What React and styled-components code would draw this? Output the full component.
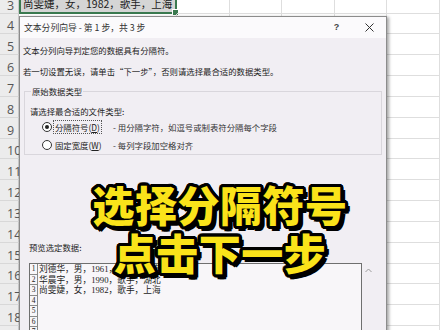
import React from 'react';
import styled, { createGlobalStyle } from 'styled-components';

const ROW_H = 20.85;

const Global = createGlobalStyle`
  html, body { margin: 0; padding: 0; background: #fff; }
  body { width: 440px; height: 330px; overflow: hidden; font-family: "Noto Sans CJK SC", "Noto Sans", sans-serif; }
  #root { width: 440px; height: 330px; overflow: hidden; }
`;

const Screen = styled.div`
  position: relative;
  width: 440px;
  height: 330px;
  overflow: hidden;
  background: #fff;
`;

const Sheet = styled.div`
  display: flex;
  flex-direction: column;
  margin-top: -7.35px;
`;

const Row = styled.div`
  display: grid;
  grid-template-columns: 19px 158px repeat(6, 52.5px);
  height: ${ROW_H}px;
`;

const RowNum = styled.div`
  box-sizing: border-box;
  background: #ececec;
  border-right: 1px solid #c9c9c9;
  border-bottom: 1px solid #d8d8d8;
  color: #555;
  font: 12.5px/12px "Open Sans", "Noto Sans", sans-serif;
  display: flex;
  align-items: flex-end;
  padding: 0 0 1px 7px;
  white-space: nowrap;
  overflow: visible;
`;

const Cell = styled.div`
  position: relative;
  box-sizing: border-box;
  border-right: 1px solid #dedede;
  border-bottom: 1px solid #dedede;
  background: ${(p) => (p.$selected ? '#d5d5d5' : 'transparent')};
  ${(p) =>
    p.$selected &&
    `
    border: 2px solid #3b7a50;
    border-top: none;
  `}
  display: flex;
  align-items: flex-end;
  padding: 0 0 2px 2px;
  font: 10.5px/12px "Noto Sans CJK SC", sans-serif;
  color: #222;
  white-space: nowrap;
`;

const FillHandle = styled.span`
  position: absolute;
  right: -4px;
  bottom: -4px;
  width: 5px;
  height: 5px;
  background: #3b7a50;
  border: 1px solid #fff;
`;

const Dialog = styled.div`
  position: absolute;
  left: 19px;
  top: 16px;
  width: 368px;
  height: 330px;
  box-sizing: border-box;
  border: 1px solid #8c8c8c;
  background: #f1eef3;
  box-shadow: 2px 1px 3px rgba(0, 0, 0, 0.35);
  display: flex;
  flex-direction: column;
`;

const TitleBar = styled.div`
  height: 21px;
  flex: none;
  background: #fbfafc;
  display: flex;
  align-items: center;
  padding-left: 4px;
  font-size: 8.8px;
  color: #333;
`;

const Title = styled.span`
  flex: 1;
  white-space: nowrap;
`;

const TitleButton = styled.span`
  width: 33px;
  height: 21px;
  display: flex;
  align-items: center;
  justify-content: center;
  color: #444;
  font: bold 9px/1 "Liberation Sans", sans-serif;
`;

const Body = styled.div`
  display: flex;
  flex-direction: column;
  padding: 6px 4px 0 3px;
  font-size: 8.4px;
  color: #222;
`;

const Para = styled.p`
  margin: ${(p) => p.$gap || 0}px 0 0 0;
  line-height: 12px;
  white-space: nowrap;
`;

const Group = styled.fieldset`
  margin: 8px 0 0 1px;
  padding: 8px 4px 1px 5px;
  border: 1px solid #d9d6dc;
  min-width: 0;
`;

const Legend = styled.legend`
  font-size: 8.4px;
  line-height: 12px;
  padding: 0 1px;
  margin-left: 1px;
`;

const Hint = styled.div`
  line-height: 12px;
  white-space: nowrap;
`;

const RadioRow = styled.div`
  display: flex;
  align-items: center;
  height: 16px;
  margin-top: 2px;
  padding-left: 12px;
  white-space: nowrap;
`;

const Radio = styled.span`
  box-sizing: border-box;
  width: 10px;
  height: 10px;
  border-radius: 50%;
  border: 1px solid #333;
  background: #fff;
  display: flex;
  align-items: center;
  justify-content: center;
  &::after {
    content: '';
    width: 4px;
    height: 4px;
    border-radius: 50%;
    background: ${(p) => (p.$checked ? '#222' : 'transparent')};
  }
`;

const OptionCell = styled.span`
  width: 60px;
  margin-left: 1px;
  flex: none;
`;

const OptionLabel = styled.span`
  display: inline-block;
  line-height: 12px;
  padding: 0 1px;
  border: 1px ${(p) => (p.$focused ? 'dotted #555' : 'solid transparent')};
  u {
    text-decoration: underline;
  }
`;

const OptionDesc = styled.span`
  color: #333;
`;

const PreviewLabel = styled.div`
  margin: 86px 0 0 6px;
  line-height: 12px;
`;

const PreviewArea = styled.div`
  display: flex;
  margin: 10px 0 0 6px;
`;

const PreviewBox = styled.div`
  box-sizing: border-box;
  width: 333px;
  height: 80px;
  border: 1px solid #6f6f6f;
  background: #f8f6f9;
  display: flex;
  flex-direction: column;
`;

const PreviewRow = styled.div`
  display: flex;
  height: 10.5px;
  flex: none;
`;

const LineNo = styled.span`
  box-sizing: border-box;
  width: 8px;
  flex: none;
  border-right: 1px solid #8a8a8a;
  border-bottom: 1px solid #8a8a8a;
  font: 7.5px/9.5px "Liberation Serif", serif;
  text-align: center;
  color: #222;
`;

const LineText = styled.span`
  padding-left: 1px;
  font: 8.7px/10.5px "Liberation Serif", "Noto Sans CJK SC", serif;
  color: #222;
  white-space: nowrap;
`;

const ScrollCol = styled.div`
  width: 12px;
  display: flex;
  justify-content: center;
  padding-top: 5px;
`;

const ring = (r, n, color) => {
  const out = [];
  for (let i = 0; i < n; i++) {
    const a = (i / n) * Math.PI * 2;
    out.push(`${(Math.cos(a) * r).toFixed(2)}px ${(Math.sin(a) * r).toFixed(2)}px 0 ${color}`);
  }
  return out;
};

const outline = [
  ...ring(3.2, 24, '#000'),
  ...ring(1.8, 12, '#000'),
  '3px 4px 0 #000',
  '4px 5px 0 #000',
  '2px 5px 0 #000',
  '5px 3px 0 #000',
].join(', ');

const Caption = styled.div`
  position: absolute;
  left: 0;
  right: 0;
  top: 180px;
  text-align: center;
  font-family: "Noto Sans CJK SC", sans-serif;
  font-weight: 900;
  font-size: 42px;
  line-height: 48px;
  letter-spacing: 0.5px;
  color: #fae31a;
  text-shadow: ${outline};
`;

const rows = [3, 4, 5, 6, 7, 8, 9, 10, 11, 12, 13, 14, 15, 16, 17, 18, 19];

const previewLines = [
  '刘德华，男，1961，歌手，香港',
  '华晨宇，男，1990，歌手，湖北',
  '尚雯婕，女，1982，歌手，上海',
  '',
  '',
  '',
  '',
];

export default function App() {
  return (
    <Screen>
      <Global />
      <Sheet>
        {rows.map((r) => (
          <Row key={r}>
            <RowNum>{r}</RowNum>
            {r === 3 ? (
              <Cell $selected>
                尚雯婕，女，1982，歌手，上海
                <FillHandle />
              </Cell>
            ) : (
              <Cell />
            )}
            <Cell />
            <Cell />
            <Cell />
            <Cell />
            <Cell />
            <Cell />
          </Row>
        ))}
      </Sheet>

      <Dialog>
        <TitleBar>
          <Title>文本分列向导 - 第 1 步，共 3 步</Title>
          <TitleButton>?</TitleButton>
          <TitleButton>
            <svg width="9" height="9" viewBox="0 0 9 9">
              <path d="M0.5 0.5 L8.5 8.5 M8.5 0.5 L0.5 8.5" stroke="#333" strokeWidth="1" fill="none" />
            </svg>
          </TitleButton>
        </TitleBar>
        <Body>
          <Para>文本分列向导判定您的数据具有分隔符。</Para>
          <Para $gap={9}>若一切设置无误，请单击“下一步”，否则请选择最合适的数据类型。</Para>
          <Group>
            <Legend>原始数据类型</Legend>
            <Hint>请选择最合适的文件类型:</Hint>
            <RadioRow>
              <Radio $checked />
              <OptionCell>
                <OptionLabel $focused>
                  分隔符号(<u>D</u>)
                </OptionLabel>
              </OptionCell>
              <OptionDesc>- 用分隔字符，如逗号或制表符分隔每个字段</OptionDesc>
            </RadioRow>
            <RadioRow>
              <Radio />
              <OptionCell>
                <OptionLabel>
                  固定宽度(<u>W</u>)
                </OptionLabel>
              </OptionCell>
              <OptionDesc>- 每列字段加空格对齐</OptionDesc>
            </RadioRow>
          </Group>
          <PreviewLabel>预览选定数据:</PreviewLabel>
          <PreviewArea>
            <PreviewBox>
              {previewLines.map((t, i) => (
                <PreviewRow key={i}>
                  <LineNo>{i + 1}</LineNo>
                  <LineText>{t}</LineText>
                </PreviewRow>
              ))}
            </PreviewBox>
            <ScrollCol>
              <svg width="7" height="5" viewBox="0 0 7 5">
                <path d="M0.5 4 L3.5 1 L6.5 4" stroke="#9a9a9a" strokeWidth="1" fill="none" />
              </svg>
            </ScrollCol>
          </PreviewArea>
        </Body>
      </Dialog>

      <Caption>
        选择分隔符号
        <br />
        点击下一步
      </Caption>
    </Screen>
  );
}
